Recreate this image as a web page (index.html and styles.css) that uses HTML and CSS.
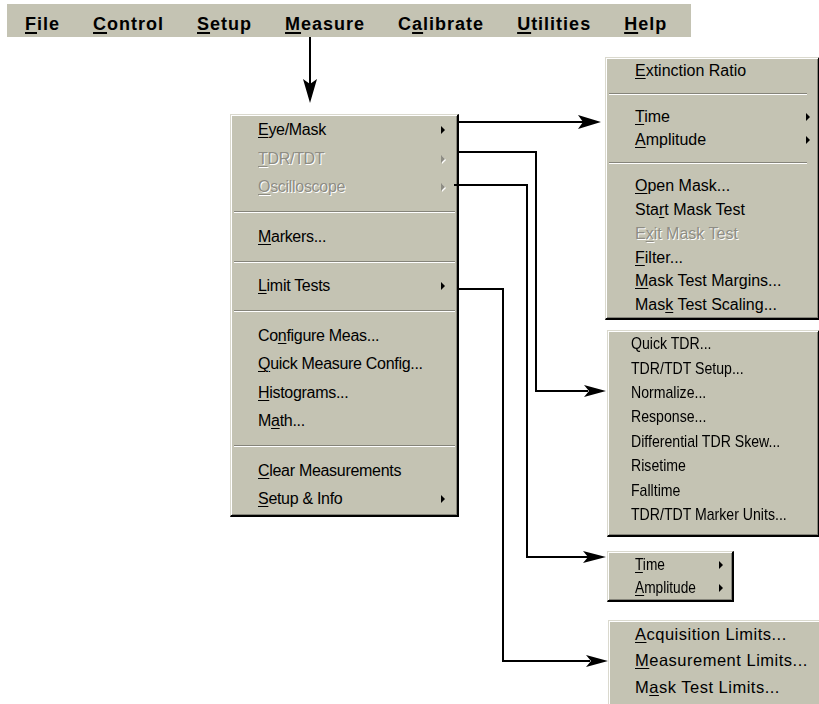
FILE: index.html
```html
<!DOCTYPE html>
<html lang="en">

<head>
    <meta charset="UTF-8">
    <title>Measure menu</title>
    <link rel="stylesheet" href="styles.css">
</head>

<body>
    <div class="canvas">
        <div class="menubar">
            <span class="mb-item"><u>F</u>ile</span>
            <span class="mb-item"><u>C</u>ontrol</span>
            <span class="mb-item"><u>S</u>etup</span>
            <span class="mb-item"><u>M</u>easure</span>
            <span class="mb-item">C<u>a</u>librate</span>
            <span class="mb-item"><u>U</u>tilities</span>
            <span class="mb-item"><u>H</u>elp</span>
        </div>

        <!-- Measure drop down -->
        <div class="menu main-menu">
            <div class="item"><span><u>E</u>ye/Mask</span><i class="tri"></i></div>
            <div class="item off"><span><u>T</u>DR/TDT</span><i class="tri"></i></div>
            <div class="item off"><span><u>O</u>scilloscope</span><i class="tri"></i></div>
            <div class="sep"></div>
            <div class="item"><span><u>M</u>arkers...</span></div>
            <div class="sep"></div>
            <div class="item"><span><u>L</u>imit Tests</span><i class="tri"></i></div>
            <div class="sep"></div>
            <div class="item"><span>Co<u>n</u>figure Meas...</span></div>
            <div class="item"><span><u>Q</u>uick Measure Config...</span></div>
            <div class="item"><span><u>H</u>istograms...</span></div>
            <div class="item"><span>M<u>a</u>th...</span></div>
            <div class="sep"></div>
            <div class="item"><span><u>C</u>lear Measurements</span></div>
            <div class="item"><span><u>S</u>etup &amp; Info</span><i class="tri"></i></div>
        </div>

        <!-- Eye/Mask -->
        <div class="menu eye-menu">
            <div class="item"><span><u>E</u>xtinction Ratio</span></div>
            <div class="sep"></div>
            <div class="item"><span><u>T</u>ime</span><i class="tri"></i></div>
            <div class="item"><span><u>A</u>mplitude</span><i class="tri"></i></div>
            <div class="sep"></div>
            <div class="item"><span><u>O</u>pen Mask...</span></div>
            <div class="item"><span>Sta<u>r</u>t Mask Test</span></div>
            <div class="item off"><span>E<u>x</u>it Mask Test</span></div>
            <div class="item"><span><u>F</u>ilter...</span></div>
            <div class="item"><span><u>M</u>ask Test Margins...</span></div>
            <div class="item"><span>Mas<u>k</u> Test Scaling...</span></div>
        </div>

        <!-- TDR/TDT -->
        <div class="menu tdr-menu narrow">
            <div class="item"><span>Quick TDR...</span></div>
            <div class="item"><span>TDR/TDT Setup...</span></div>
            <div class="item"><span>Normalize...</span></div>
            <div class="item"><span>Response...</span></div>
            <div class="item"><span>Differential TDR Skew...</span></div>
            <div class="item"><span>Risetime</span></div>
            <div class="item"><span>Falltime</span></div>
            <div class="item"><span>TDR/TDT Marker Units...</span></div>
        </div>

        <!-- Oscilloscope -->
        <div class="menu scope-menu narrow">
            <div class="item"><span><u>T</u>ime</span><i class="tri"></i></div>
            <div class="item"><span><u>A</u>mplitude</span><i class="tri"></i></div>
        </div>

        <!-- Limit Tests -->
        <div class="menu limit-menu">
            <div class="item"><span><u>A</u>cquisition Limits...</span></div>
            <div class="item"><span><u>M</u>easurement Limits...</span></div>
            <div class="item"><span>M<u>a</u>sk Test Limits...</span></div>
        </div>

        <svg class="wires" width="819" height="704" viewBox="0 0 819 704">
            <g fill="none" stroke="#000" stroke-width="2">
                <path d="M310 37 V84" />
                <path d="M458 122 H583" />
                <path d="M458 152 H536 V391 H588" />
                <path d="M454 185 H527 V557 H588" />
                <path d="M458 289 H503 V661 H590" />
            </g>
            <g fill="#000">
                <path d="M310 103 L303 79 L310 84 L317 79 Z" />
                <path d="M601 122 L578 115 L583 122 L578 129 Z" />
                <path d="M606 391 L584 385 L589 391 L584 397 Z" />
                <path d="M606 557 L583 551 L588 557 L583 563 Z" />
                <path d="M608 661 L586 655 L591 661 L586 667 Z" />
            </g>
        </svg>
    </div>
</body>

</html>
```

FILE: styles.css
```css
* {
    box-sizing: border-box;
}

body {
    margin: 0;
    background: #fff;
}

.canvas {
    width: 819px;
    height: 704px;
    position: relative;
    overflow: hidden;
    background: #fff;
}

u {
    text-decoration: underline;
    text-decoration-thickness: 1px;
    text-underline-offset: 2px;
}

/* top menu bar */
.menubar {
    width: 684px;
    height: 33px;
    margin: 4px 0 0 7px;
    padding: 10px 0 0 18px;
    background: #c4c3b3;
    display: flex;
    gap: 33px;
    font-family: "Liberation Sans", Arial, sans-serif;
    font-weight: bold;
    font-size: 18px;
    line-height: 20px;
    letter-spacing: 1px;
    color: #000;
}

.menubar u {
    text-decoration-thickness: 2px;
    text-underline-offset: 2px;
}

/* pop up menus */
.menu {
    position: absolute;
    background: #c4c3b3;
    border-style: solid;
    border-width: 1px 2px 2px 1px;
    border-color: #dad9ce #000 #000 #dad9ce;
    box-shadow: inset 1px 1px #fff, inset -1px -1px #85847a;
    font-family: "Liberation Sans", Arial, sans-serif;
    color: #000;
}

.item {
    display: flex;
    align-items: center;
    justify-content: space-between;
    white-space: nowrap;
}

.item.off {
    color: #8e8d84;
    text-shadow: 1px 1px 0 #fff;
}

.tri {
    width: 0;
    height: 0;
    border-left: 4px solid #000;
    border-top: 4px solid transparent;
    border-bottom: 4px solid transparent;
}

.item.off .tri {
    border-left-color: #8e8d84;
    filter: drop-shadow(1px 1px 0 #fff);
}

.sep {
    border-top: 1px solid #85847a;
    border-bottom: 1px solid #fff;
    margin: 9.5px 3px;
}

/* bitmap font of the scope screens is tall and condensed */
.narrow .item span {
    display: inline-block;
    transform: scaleX(0.83);
    transform-origin: 0 50%;
}

.main-menu {
    left: 230px;
    top: 114px;
    width: 229px;
    padding: 1px 12px 1px 27px;
    font-size: 16px;
    letter-spacing: -0.3px;
}

.main-menu .item {
    height: 28.5px;
}

.main-menu .sep {
    margin-left: -24px;
    margin-right: -10px;
}

.eye-menu {
    left: 605px;
    top: 57px;
    width: 215px;
    padding: 1px 8px 1px 29px;
    font-size: 16px;
}

.eye-menu .item {
    height: 23.8px;
}

.eye-menu .sep {
    margin: 10px 3px 10px -26px;
}

.tdr-menu {
    left: 607px;
    top: 330px;
    width: 213px;
    padding: 1px 8px 8px 23px;
    font-size: 17px;
}

.tdr-menu .item {
    height: 24.4px;
}

.scope-menu {
    left: 607px;
    top: 551px;
    width: 127px;
    padding: 1px 9px 1px 27px;
    font-size: 16.5px;
}

.scope-menu .item {
    height: 23px;
}

.limit-menu {
    left: 608px;
    top: 620px;
    width: 215px;
    height: 100px;
    padding: 0 8px 1px 26px;
    font-size: 16.5px;
    letter-spacing: 0.5px;
}

.limit-menu .item {
    height: 26.5px;
}

.wires {
    position: absolute;
    left: 0;
    top: 0;
    pointer-events: none;
}
```
